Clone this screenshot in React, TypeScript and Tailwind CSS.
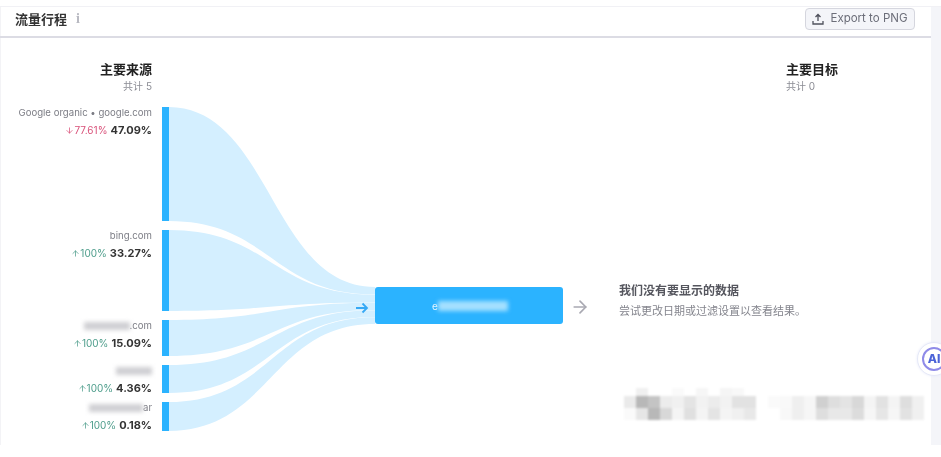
import type { ReactNode } from "react";
import { ArrowDown, ArrowRight, ArrowUp } from "lucide-react";

type Row = { h: number; gap: number; name: ReactNode; delta: string; pct: string; down?: boolean };

const Smudge = ({ w, tone = "bg-[#cfcfd3]" }: { w: number; tone?: string }) => (
  <span className={`inline-block h-[8px] ${tone} blur-[2px] align-middle`} style={{ width: w }} />
);

const rows: Row[] = [
  { h: 114, gap: 9, name: <>Google organic • google.com</>, delta: "77.61%", pct: "47.09%", down: true },
  { h: 81, gap: 9, name: <>bing.com</>, delta: "100%", pct: "33.27%" },
  { h: 36, gap: 9, name: <><Smudge w={46} />.com</>, delta: "100%", pct: "15.09%" },
  { h: 28, gap: 9, name: <><Smudge w={36} /></>, delta: "100%", pct: "4.36%" },
  { h: 29, gap: 0, name: <><Smudge w={54} />ar</>, delta: "100%", pct: "0.18%" },
];

const flows = [
  [107, 221, 287, 294.5],
  [230, 311, 294.7, 302.5],
  [320, 356, 302.7, 310],
  [365, 393, 310.2, 317],
  [402, 431, 317.2, 324],
];

function flowPath([a, b, c, d]: number[]) {
  const x0 = 168, x1 = 375, m = 271;
  return `M${x0} ${a}C${m} ${a} ${m} ${c} ${x1} ${c}L${x1} ${d}C${m} ${d} ${m} ${b} ${x0} ${b}Z`;
}

// Mosaic cell tones, row by row, 12px cells
const mosaic = [
  ["#ffffff", "#f0f0f0", "#ffffff", "#ffffff", "#fafafa", "#ffffff", "#f6f6f6", "#ffffff", "#f5f5f5", "#f8f8f8", "#ffffff", "#ffffff", "#ffffff", "#ffffff", "#ffffff", "#ffffff", "#ffffff", "#ffffff", "#ffffff", "#ffffff", "#ffffff", "#ffffff", "#ffffff", "#ffffff", "#ffffff"],
  ["#eaeaea", "#b8b8b8", "#c4c4c4", "#ececec", "#f0f0f0", "#e4e4e4", "#f2f2f2", "#ececec", "#f2f2f2", "#e2e2e2", "#e2e2e2", "#ffffff", "#fafafa", "#f9f9f9", "#efefef", "#f6f6f6", "#d0d0d0", "#dedede", "#e4e4e4", "#d8d8d8", "#f4f4f4", "#e2e2e2", "#f4f4f4", "#dedede", "#f0f0f0"],
  ["#fafafa", "#e6e6e6", "#b8b8b8", "#d8d8d8", "#f4f4f4", "#e0e0e0", "#f4f4f4", "#e4e4e4", "#f4f4f4", "#f0f0f0", "#e8e8e8", "#ffffff", "#ffffff", "#f8f8f8", "#efefef", "#f6f6f6", "#dedede", "#e8e8e8", "#e8e8e8", "#dcdcdc", "#f6f6f6", "#e6e6e6", "#f6f6f6", "#e2e2e2", "#f0f0f0"],
];

export default function App() {
  return (
    <div className="relative flex h-[457px] w-[941px] flex-col overflow-hidden bg-white font-['Inter','Noto_Sans_CJK_SC',sans-serif] blur-[0.4px]">
      <div className="h-[7px] shrink-0 border-b border-[#f1f1f5] bg-white" />
      <div className="flex h-[438px]">
        <main className="flex w-[931px] flex-col shadow-[inset_1px_0_0_#f3f3f6]">
          <header className="flex h-[31px] items-start justify-between border-b-2 border-[#dcdce4] pl-[15px] pr-[16px]">
            <div className="mt-[2px] flex h-[20px] items-center gap-[9px]">
              <h1 className="text-[13px] font-bold leading-[20px] text-[#333]">流量行程</h1>
              <span className="font-['Liberation_Serif',serif] text-[14px] font-bold leading-none text-[#b9bac2]">i</span>
            </div>
            <button className="mt-[1px] flex h-[22px] w-[110px] items-center justify-center gap-[6px] rounded-[4px] border border-[#d5d6de] bg-[#f4f5f9] text-[11.5px] text-[#6c6e79]">
              <svg width="12" height="12" viewBox="0 0 12 12" fill="none" stroke="#4f515c" strokeWidth="1.3">
                <path d="M6 8V1.5M3.5 4L6 1.5L8.5 4M1 8v3h10V8" />
              </svg>
              Export to PNG
            </button>
          </header>

          <div className="flex flex-1">
            {/* source column */}
            <section className="w-[169px] shrink-0">
              <div className="pr-[17px] pt-[23px] text-right">
                <h2 className="text-[13px] font-bold leading-[16px] text-[#222]">主要来源</h2>
                <p className="mt-[3px] text-[10px] leading-[12px] text-[#8b8c94]">共计 5</p>
              </div>
              <div className="mt-[15px] flex flex-col">
                {rows.map((r, i) => (
                  <div key={i} className="flex justify-end" style={{ height: r.h, marginBottom: r.gap }}>
                    <div className="pr-[10px] text-right">
                      <div className="whitespace-nowrap text-[9.6px] leading-[11px] text-[#7b7c84]">{r.name}</div>
                      <div className="mt-[6px] flex items-center justify-end gap-[3px] leading-[12px]">
                        <span className={`flex items-center text-[10px] ${r.down ? "text-[#d9527a]" : "text-[#4f9e8c]"}`}>
                          {r.down ? <ArrowDown size={9} strokeWidth={2} /> : <ArrowUp size={9} strokeWidth={2} />}
                          {r.delta}
                        </span>
                        <span className="text-[11px] font-bold text-[#333]">{r.pct}</span>
                      </div>
                    </div>
                    <div className="w-[7px] shrink-0 bg-[#2bb3ff]" />
                  </div>
                ))}
              </div>
            </section>

            {/* sankey flows */}
            <svg width="206" height="400" viewBox="169 38 206 400" className="shrink-0">
              {flows.map((f, i) => (
                <path key={i} d={flowPath(f)} fill="#d4efff" />
              ))}
              <path d="M356 308H367M362.5 303.5L367 308L362.5 312.5" fill="none" stroke="#36a9f5" strokeWidth="1.8" />
            </svg>

            {/* target node */}
            <div className="mt-[249px] flex h-[37px] w-[188px] shrink-0 items-center justify-center rounded-[3px] bg-[#2bb3ff] pl-[2px]">
              <span className="text-[10px] leading-none text-white/90">e</span>
              <span className="h-[10px] w-[70px] bg-[#a5e0ff] blur-[2px]" />
            </div>
            <div className="ml-[7px] mt-[259px] h-[20px] w-[20px] shrink-0">
              <ArrowRight size={20} strokeWidth={2} className="text-[#a9a9b2]" />
            </div>

            {/* right column */}
            <section className="ml-[29px] flex-1">
              <div className="ml-[167px] pt-[23px]">
                <h2 className="text-[13px] font-bold leading-[16px] text-[#222]">主要目标</h2>
                <p className="mt-[3px] text-[10px] leading-[12px] text-[#8b8c94]">共计 0</p>
              </div>
              <div className="mt-[191px]">
                <h3 className="text-[12px] font-bold leading-[16px] text-[#55565e]">我们没有要显示的数据</h3>
                <p className="mt-[5px] text-[11px] leading-[14px] text-[#84858d]">尝试更改日期或过滤设置以查看结果。</p>
              </div>
              <div className="ml-[5px] mt-[70px] flex w-[300px] flex-col blur-[0.8px]">
                {mosaic.map((tones, ri) => (
                  <div key={ri} className={`flex ${ri === 0 ? "h-[8px]" : "h-[12px]"}`}>
                    {tones.map((c, ci) => (
                      <div key={ci} className="h-full w-[12px] shrink-0" style={{ backgroundColor: c }} />
                    ))}
                  </div>
                ))}
              </div>
            </section>
          </div>
        </main>
        <aside className="flex-1 bg-[#f4f5f9]" />
      </div>

      {/* floating AI button */}
      <div className="absolute left-[917px] top-[342px] flex h-[34px] w-[34px] items-center justify-center rounded-full border border-[#e6e9f8] bg-white shadow-[0_0_3px_#e8ebfa]">
        <div className="flex h-[24px] w-[24px] items-center justify-center rounded-full border-2 border-[#8f8be8] text-[12px] font-extrabold text-[#4b63d8]">
          AI
        </div>
      </div>
    </div>
  );
}
